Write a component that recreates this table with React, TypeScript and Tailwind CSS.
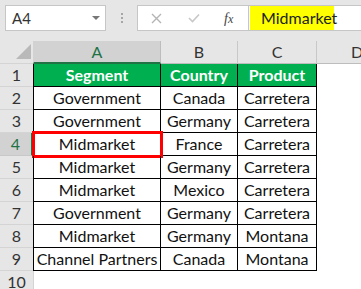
import React from "react";

const data: [string, string, string][] = [
  ["Government", "Canada", "Carretera"],
  ["Government", "Germany", "Carretera"],
  ["Midmarket", "France", "Carretera"],
  ["Midmarket", "Germany", "Carretera"],
  ["Midmarket", "Mexico", "Carretera"],
  ["Government", "Germany", "Carretera"],
  ["Midmarket", "Germany", "Montana"],
  ["Channel Partners", "Canada", "Montana"],
];

const font = { fontFamily: "Lato, 'Open Sans', sans-serif" };

export default function App() {
  return (
    <div className="w-[361px] h-[289px] overflow-hidden bg-white" style={font}>
      {/* formula bar */}
      <div className="h-[41px] bg-[#e6e6e6] flex items-start pt-[5px] pl-[5px]">
        <div className="w-[101px] h-[26px] bg-white border border-[#c6c6c6] flex items-center pl-[6px] pr-[5px] text-[15px] text-[#333]">
          <span className="flex-1">A4</span>
          <svg width="8" height="5" viewBox="0 0 8 5">
            <path d="M0 0 L8 0 L4 4 Z" fill="#777" />
          </svg>
        </div>
        <div className="w-[31px] h-[26px] flex flex-col items-center justify-center gap-[2px]">
          <div className="w-[2px] h-[2px] bg-[#a6a6a6]" />
          <div className="w-[2px] h-[2px] bg-[#a6a6a6]" />
          <div className="w-[2px] h-[2px] bg-[#a6a6a6]" />
        </div>
        <div className="w-[112px] h-[26px] bg-white border border-[#c6c6c6] flex items-center">
          <svg className="ml-[13px]" width="11" height="11" viewBox="0 0 11 11">
            <path d="M1 1 L10 10 M10 1 L1 10" stroke="#b4b4b4" strokeWidth="1.4" />
          </svg>
          <svg className="ml-[26px]" width="12" height="10" viewBox="0 0 12 10">
            <path d="M1 5 L4.5 8.5 L11 1.5" stroke="#c8c8c8" strokeWidth="1.6" fill="none" />
          </svg>
          <span
            className="ml-[24px] text-[14px] italic text-[#444]"
            style={{ fontFamily: "'Liberation Serif', serif" }}
          >
            f<span className="text-[12px]">x</span>
          </span>
        </div>
        <div className="flex-1 h-[26px] bg-white border-y border-[#c6c6c6] flex items-stretch">
          <div className="ml-[1px] w-[84px] bg-[#ffff00] flex items-center pl-[11px] text-[16px] text-[#222]">
            Midmarket
          </div>
        </div>
      </div>

      {/* grid */}
      <div className="grid grid-cols-[33px_128px_77px_79px_80px] auto-rows-[23px] text-[16px]">
        {/* header row */}
        <div className="bg-[#e6e6e6] border-b border-[#d4d4d4] relative">
          <svg className="absolute left-[16px] top-[3px]" width="15" height="15" viewBox="0 0 15 15">
            <path d="M15 0 L15 15 L0 15 Z" fill="#b9b9b9" />
          </svg>
        </div>
        <div className="bg-[#d2d2d2] border-r border-[#bdbdbd] border-b-2 border-b-[#217346] flex items-center justify-center text-[#217346] border-l border-l-[#d2d2d2]">
          A
        </div>
        <div className="bg-[#e6e6e6] border-r border-[#c8c8c8] border-b border-b-[#bdbdbd] flex items-center justify-center text-[#333]">
          B
        </div>
        <div className="bg-[#e6e6e6] border-r border-[#c8c8c8] border-b border-b-[#bdbdbd] flex items-center justify-center text-[#333]">
          C
        </div>
        <div className="bg-[#e6e6e6] border-b border-[#bdbdbd] flex items-center justify-center text-[#333]">
          D
        </div>

        {/* row 1 */}
        <div className="bg-[#e6e6e6] border-b border-[#d4d4d4] flex items-center justify-center text-[#333]">1</div>
        <div className="bg-[#00b050] border-l border-r border-b border-black flex items-center justify-center font-bold text-white">Segment</div>
        <div className="bg-[#00b050] border-r border-b border-black flex items-center justify-center font-bold text-white">Country</div>
        <div className="bg-[#00b050] border-r border-b border-black flex items-center justify-center font-bold text-white">Product</div>
        <div />

        {data.map((r, i) => {
          const n = i + 2;
          const sel = n === 4;
          return (
            <React.Fragment key={n}>
              <div
                className={
                  sel
                    ? "bg-[#d2d2d2] border-b border-[#c8c8c8] border-r-2 border-r-[#217346] flex items-center justify-center text-[#217346]"
                    : "bg-[#e6e6e6] border-b border-[#d4d4d4] flex items-center justify-center text-[#333]"
                }
              >
                {n}
              </div>
              <div className="relative border-l border-r border-b border-black flex items-center justify-center text-[#111] whitespace-nowrap">
                {r[0]}
                {sel && (
                  <div className="absolute -left-[2px] -top-[2px] -right-[3px] -bottom-[3px] border-[3px] border-[#ff0000]" />
                )}
              </div>
              <div className="border-r border-b border-black flex items-center justify-center text-[#111]">{r[1]}</div>
              <div className="border-r border-b border-black flex items-center justify-center text-[#111]">{r[2]}</div>
              <div />
            </React.Fragment>
          );
        })}

        {/* row 10 */}
        <div className="bg-[#e6e6e6] border-b border-[#d4d4d4] flex items-center justify-center text-[#333]">10</div>
        <div className="border-l border-[#d4d4d4]" />
        <div />
        <div />
        <div />
      </div>
    </div>
  );
}
